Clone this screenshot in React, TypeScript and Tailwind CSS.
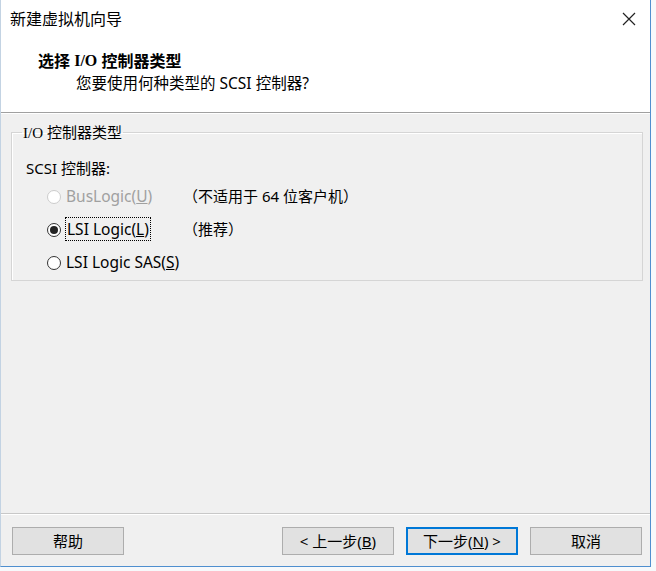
import React from "react";

const font = { fontFamily: '"Noto Sans", "Noto Sans CJK SC", sans-serif' };

function Radio({ checked, disabled }: { checked?: boolean; disabled?: boolean }) {
  return (
    <span
      className={`flex items-center justify-center size-[14px] rounded-full border bg-white ${
        disabled ? "border-[#cccccc] bg-[#f7f7f7]" : "border-[#333333]"
      }`}
    >
      {checked && <span className="size-[8px] rounded-full bg-[#222222]" />}
    </span>
  );
}

function Btn({ children, focused }: { children: React.ReactNode; focused?: boolean }) {
  return (
    <button
      className={`w-[112px] h-[28px] flex items-center justify-center bg-[#e1e1e1] text-[15px] text-black ${
        focused ? "border-2 border-[#0078d7]" : "border border-[#adadad]"
      }`}
    >
      {children}
    </button>
  );
}

export default function App() {
  return (
    <div className="w-[656px] h-[571px] bg-[#f7f9fb]" style={font}>
      <div className="w-[651px] h-[567px] flex flex-col bg-[#f0f0f0] border-l border-l-[#c3d3e3] border-r border-r-[#4f8fcf] border-b border-b-[#4f8fcf]">
        {/* title bar + header */}
        <div className="bg-white border-b border-[#a0a0a0] shadow-[0_1px_0_#ffffff]">
          <div className="h-[37px] flex items-center justify-between pl-[9px] pr-[10px]">
            <span className="text-[16px] text-black">新建虚拟机向导</span>
            <svg width="14" height="14" viewBox="0 0 14 14" className="mr-[4px]">
              <path d="M1 1 L13 13 M13 1 L1 13" stroke="#222" strokeWidth="1.2" />
            </svg>
          </div>
          <div className="pt-[14px] pb-[18px] flex flex-col gap-[3px]">
            <div className="pl-[37px] h-[20px] flex items-center text-[16px] font-bold text-black">
              选择&nbsp;<span style={{ fontFamily: '"Liberation Serif", serif' }}>I/O</span>&nbsp;控制器类型
            </div>
            <div className="pl-[75px] h-[20px] flex items-center text-[15.5px] text-black">
              您要使用何种类型的 SCSI 控制器?
            </div>
          </div>
        </div>

        {/* body */}
        <div className="flex-1 pt-[9px] px-[10px]">
          <fieldset className="w-[632px] border border-[#d5d5d5] shadow-[inset_1px_1px_0_#ffffff] pb-[1px]">
            <legend className="ml-[10px] px-[1px] h-[20px] text-[15px] text-black leading-[20px]">
              <span style={{ fontFamily: '"Liberation Serif", serif' }}>I/O</span> 控制器类型
            </legend>
            <div className="pl-[14px] pt-[14px] h-[38px] flex items-center text-[15px] text-black">
              SCSI 控制器:
            </div>
            <div className="flex flex-col text-[15.5px] text-black">
              <div className="h-[33px] flex items-center pl-[35px]">
                <Radio disabled />
                <span className="w-[118px] ml-[4px] px-[1px] text-[#a0a0a0]">
                  BusLogic(<span className="underline">U</span>)
                </span>
                <span className="text-[15px]">（不适用于 64 位客户机）</span>
              </div>
              <div className="h-[33px] flex items-center pl-[35px]">
                <Radio checked />
                <span className="w-[118px] ml-[4px]">
                  <span className="border border-dotted border-black px-[1px]">
                    LSI Logic(<span className="underline">L</span>)
                  </span>
                </span>
                <span className="text-[15px]">（推荐）</span>
              </div>
              <div className="h-[33px] flex items-center pl-[35px]">
                <Radio />
                <span className="ml-[4px] px-[1px]">
                  LSI Logic SAS(<span className="underline">S</span>)
                </span>
              </div>
            </div>
          </fieldset>
        </div>

        {/* footer */}
        <div className="border-t border-[#c8c8c8] shadow-[inset_0_1px_0_#ffffff] pt-[13px] pb-[11px] pl-[11px] pr-[8px] flex items-center">
          <Btn>帮助</Btn>
          <div className="flex-1" />
          <div className="flex gap-[12px]">
            <Btn>
              &lt; 上一步(<span className="underline">B</span>)
            </Btn>
            <Btn focused>
              下一步(<span className="underline">N</span>) &gt;
            </Btn>
            <Btn>取消</Btn>
          </div>
        </div>
      </div>
    </div>
  );
}
